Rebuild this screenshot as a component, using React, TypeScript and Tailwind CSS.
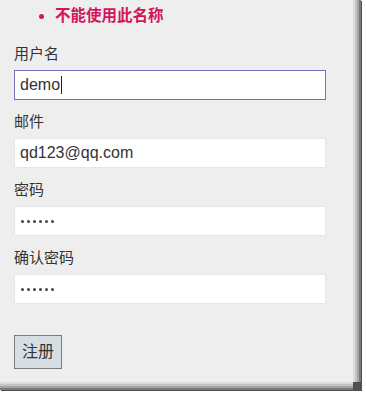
const CJK = "font-['Liberation_Sans','Noto_Sans_CJK_SC',sans-serif]";

function Field({ label, children, focused }: { label: string; children: React.ReactNode; focused?: boolean }) {
  return (
    <div className="mb-[11px]">
      <div className="h-[22px] text-[15px] leading-[22px] text-[#333]">{label}</div>
      <div
        className={
          "mt-[5px] flex h-[30px] w-[312px] items-center bg-white px-[5px] " +
          (focused ? "border border-[#7a6db5]" : "border border-[#e6e6e6]")
        }
      >
        {children}
      </div>
    </div>
  );
}

function Dots() {
  return (
    <div className="flex gap-[3px] pl-px">
      {[0, 1, 2, 3, 4, 5].map((i) => (
        <span key={i} className="h-[3px] w-[3px] rounded-full bg-[#444]" />
      ))}
    </div>
  );
}

export default function App() {
  return (
    <div className={"h-[396px] w-[366px] bg-white " + CJK}>
      <div className="h-[382px] w-[353px] bg-[#eeeeee] px-[14px] shadow-[2px_0_0_#dcdcdc,0_2px_0_#dcdcdc,4px_0_0_#c4c4c4,0_4px_0_#c4c4c4,6px_0_0_#a4a4a4,0_6px_0_#a4a4a4,8px_0_0_#7a7a7a,0_8px_0_#7a7a7a,9px_1px_0_#505050,1px_9px_0_#505050,9px_9px_0_#505050]">
        <ul className="pt-[5px]">
          <li className="flex h-[22px] items-center pl-[25px] text-[15.5px] font-bold text-[#d4145a]">
            <span className="mr-[11px] h-[5px] w-[5px] rounded-full bg-[#d4145a]" />
            不能使用此名称
          </li>
        </ul>
        <div className="mt-[16px]">
          <Field label="用户名" focused>
            <span className="text-[16px] text-[#333]">demo</span>
            <span className="ml-px h-[18px] w-px bg-[#222]" />
          </Field>
          <Field label="邮件">
            <span className="text-[16px] text-[#333]">qd123@qq.com</span>
          </Field>
          <Field label="密码">
            <Dots />
          </Field>
          <Field label="确认密码">
            <Dots />
          </Field>
        </div>
        <button className="mt-[20px] h-[34px] w-[48px] border border-[#7c7c7c] bg-[#d6dde3] text-[16px] text-[#333]">
          注册
        </button>
      </div>
    </div>
  );
}
